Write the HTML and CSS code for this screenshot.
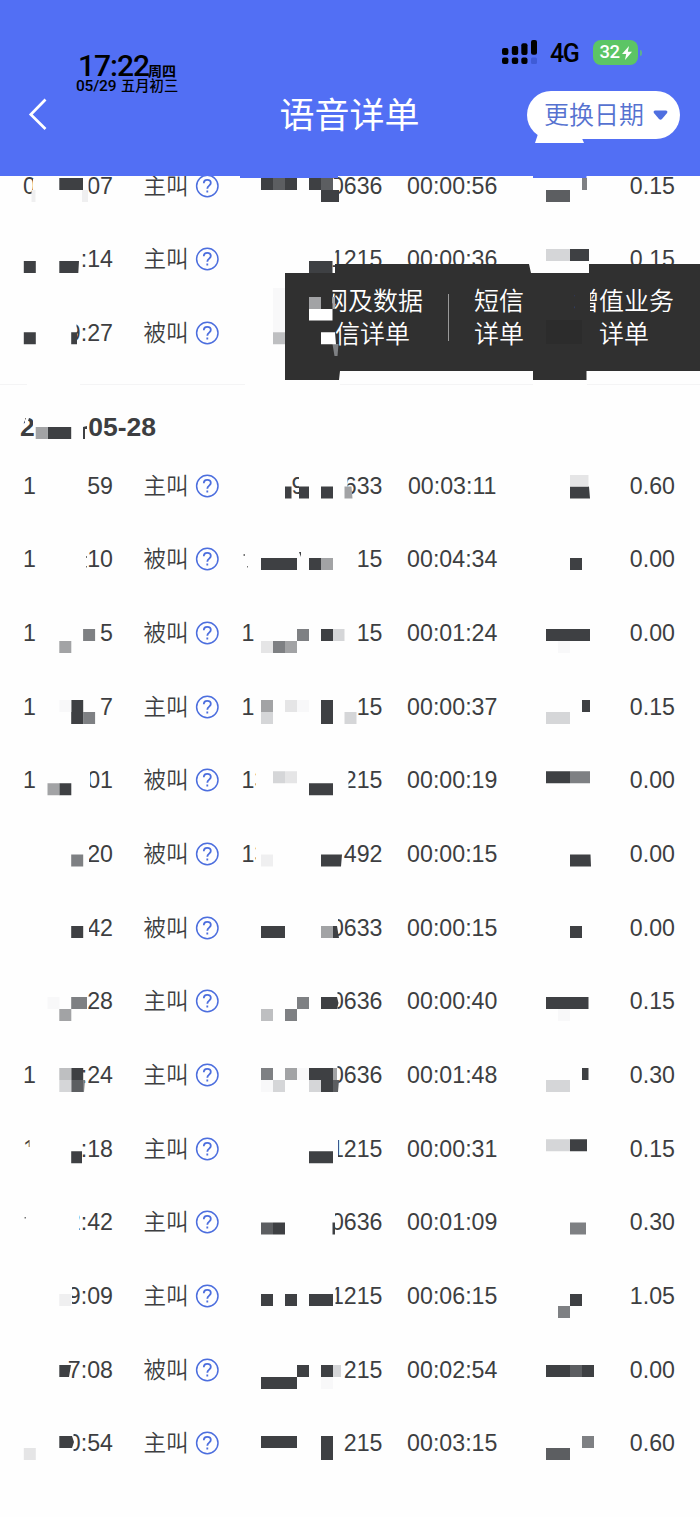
FILE: index.html
```html
<!DOCTYPE html>
<html lang="zh-CN">
<head>
<meta charset="utf-8">
<title>语音详单</title>
<link rel="stylesheet" href="styles.css">
</head>
<body>
<svg class="defs" width="0" height="0" aria-hidden="true">
  <symbol id="help" viewBox="0 0 24 24"><circle cx="12.300" cy="12" r="10.700"/><path stroke-width="1.800" d="M8.800 9.300C8.800 7 10.200 5.900 12.200 5.900s3.600 1.300 3.600 3.200c0 2.500-3.500 2.700-3.500 5.600M12.300 16.600v2"/></symbol>
</svg>
<div class="screen">
  <header class="header">
    <div class="status">
      <div class="clock">
        <div class="clock-main"><span class="clock-time">17:22</span><span class="clock-week">周四</span></div>
        <div class="clock-date"><span class="clock-md">05/29</span><span>五月初三</span></div>
      </div>
      <div class="status-right">
        <svg class="signal" width="36" height="26" viewBox="0 0 36 26"><g fill="#000"><rect x="0" y="8" width="6.4" height="7" rx="2"/><rect x="9.8" y="6" width="6.4" height="9" rx="2"/><rect x="19.3" y="3.3" width="6.2" height="11.7" rx="2"/><rect x="29" y="0" width="6" height="14.8" rx="2"/><rect x="0" y="17.5" width="6.4" height="6.6" rx="2"/><rect x="9.8" y="17.5" width="6.4" height="6.6" rx="2"/><rect x="19.3" y="17.5" width="6.2" height="6.6" rx="2"/></g><rect x="29" y="17.5" width="6" height="6.6" rx="1.5" fill="#3f5bd6"/></svg>
        <span class="network">4G</span>
        <span class="battery">32<svg width="10" height="14" viewBox="0 0 10 14"><path d="M7 0 0 8h4.2L3 14l7-8.200H5.800z" fill="#fff"/></svg></span>
        <i class="nub"></i>
      </div>
    </div>
    <nav class="nav">
      <svg class="back" width="20" height="34" viewBox="0 0 20 34"><path d="M17.500 1.500 2.800 16.500 17.500 31" fill="none" stroke="#fff" stroke-width="2.700"/></svg>
      <h1 class="title">语音详单</h1>
      <button class="picker">更换日期<svg class="caret" width="15" height="11" viewBox="0 0 15 11"><path d="M2.200.500h10.600q2.200.400 1.300 2.400L9 9q-1.500 1.600-3 0L.900 2.900Q0 .900 2.200.500z" fill="#4f6fe0"/></svg></button>
    </nav>
  </header>

  <main>
    <section class="group first">
      <div class="row"><span class="time"><b>0</b><b>07</b></span><span class="type"><em>主叫</em><svg class="help"><use href="#help"/></svg></span><span class="num"><b></b><b>0636</b></span><span class="dur">00:00:56</span><span class="fee">0.15</span></div>
      <div class="row"><span class="time"><b></b><b>:14</b></span><span class="type"><em>主叫</em><svg class="help"><use href="#help"/></svg></span><span class="num"><b></b><b>1215</b></span><span class="dur">00:00:36</span><span class="fee">0.15</span></div>
      <div class="row"><span class="time"><b></b><b>9:27</b></span><span class="type"><em>被叫</em><svg class="help"><use href="#help"/></svg></span><span class="num"></span><span class="dur"></span><span class="fee"></span></div>
    </section>
    <section class="group">
      <h2 class="day"><span>2</span><span>05-28</span></h2>
      <div class="row"><span class="time"><b>1</b><b>59</b></span><span class="type"><em>主叫</em><svg class="help"><use href="#help"/></svg></span><span class="num"><b class="mid">9</b><b>633</b></span><span class="dur">00:03:11</span><span class="fee">0.60</span></div>
      <div class="row"><span class="time"><b>1</b><b>10</b></span><span class="type"><em>被叫</em><svg class="help"><use href="#help"/></svg></span><span class="num"><b></b><b>15</b></span><span class="dur">00:04:34</span><span class="fee">0.00</span></div>
      <div class="row"><span class="time"><b>1</b><b>5</b></span><span class="type"><em>被叫</em><svg class="help"><use href="#help"/></svg></span><span class="num"><b>1</b><b>15</b></span><span class="dur">00:01:24</span><span class="fee">0.00</span></div>
      <div class="row"><span class="time"><b>1</b><b>7</b></span><span class="type"><em>主叫</em><svg class="help"><use href="#help"/></svg></span><span class="num"><b>1</b><b>15</b></span><span class="dur">00:00:37</span><span class="fee">0.15</span></div>
      <div class="row"><span class="time"><b>1</b><b>01</b></span><span class="type"><em>被叫</em><svg class="help"><use href="#help"/></svg></span><span class="num"><b>13</b><b>215</b></span><span class="dur">00:00:19</span><span class="fee">0.00</span></div>
      <div class="row"><span class="time"><b></b><b>20</b></span><span class="type"><em>被叫</em><svg class="help"><use href="#help"/></svg></span><span class="num"><b>13</b><b>492</b></span><span class="dur">00:00:15</span><span class="fee">0.00</span></div>
      <div class="row"><span class="time"><b></b><b>42</b></span><span class="type"><em>被叫</em><svg class="help"><use href="#help"/></svg></span><span class="num"><b></b><b>0633</b></span><span class="dur">00:00:15</span><span class="fee">0.00</span></div>
      <div class="row"><span class="time"><b></b><b>28</b></span><span class="type"><em>主叫</em><svg class="help"><use href="#help"/></svg></span><span class="num"><b></b><b>0636</b></span><span class="dur">00:00:40</span><span class="fee">0.15</span></div>
      <div class="row"><span class="time"><b>1</b><b>:24</b></span><span class="type"><em>主叫</em><svg class="help"><use href="#help"/></svg></span><span class="num"><b></b><b>0636</b></span><span class="dur">00:01:48</span><span class="fee">0.30</span></div>
      <div class="row"><span class="time"><b>1</b><b>:18</b></span><span class="type"><em>主叫</em><svg class="help"><use href="#help"/></svg></span><span class="num"><b></b><b>1215</b></span><span class="dur">00:00:31</span><span class="fee">0.15</span></div>
      <div class="row"><span class="time"><b></b><b>2:42</b></span><span class="type"><em>主叫</em><svg class="help"><use href="#help"/></svg></span><span class="num"><b></b><b>0636</b></span><span class="dur">00:01:09</span><span class="fee">0.30</span></div>
      <div class="row"><span class="time"><b></b><b>9:09</b></span><span class="type"><em>主叫</em><svg class="help"><use href="#help"/></svg></span><span class="num"><b></b><b>1215</b></span><span class="dur">00:06:15</span><span class="fee">1.05</span></div>
      <div class="row"><span class="time"><b></b><b>7:08</b></span><span class="type"><em>被叫</em><svg class="help"><use href="#help"/></svg></span><span class="num"><b></b><b>215</b></span><span class="dur">00:02:54</span><span class="fee">0.00</span></div>
      <div class="row"><span class="time"><b></b><b>0:54</b></span><span class="type"><em>主叫</em><svg class="help"><use href="#help"/></svg></span><span class="num"><b></b><b>215</b></span><span class="dur">00:03:15</span><span class="fee">0.60</span></div>
    </section>
  </main>

  <div class="menu">
    <span class="menu-item data"><span>网及数据</span><span>信详单</span></span>
    <i class="menu-line"></i>
    <span class="menu-item sms"><span>短信</span><span>详单</span></span>
    <span class="menu-item extra"><span>增值业务</span><span>详单</span></span>
  </div>

  <!-- Redaction layer: blanks first, mosaic tiles above -->
  <svg class="mosaic" width="700" height="1517" viewBox="0 0 700 1517">
    <path fill="#fefefe" d="M33 179h10v20H33zM84 179h4.500v20H84zM325 179h12v20h-12zM325 250h10.500v14H325zM65 320h11.500v25H65zM27 382h53v4H27zM245 382h95v4h-95zM533 382h54v4h-54zM20 416l5 0 0 8-5 4zM26 418l-4 9 4 0 3-9zM33 416h3v11h-3zM299 474h9v24h-9zM340 474h7.500v24H340zM240 546h20v8h-20zM240 556h20v14h-20zM84 771h6v20H84zM256 770h13v22h-13zM342 770h6.500v22H342zM256 843h13v24h-13zM84 844h5v20H84zM84 918h5v20H84zM325 918h13v22h-13zM325 991h12.500v22H325zM325 1065h12.500v22H325zM22 1147h12v16H22zM29.500 1138h7v20h-7zM325 1138h13v24h-13zM65 1212h14v22H65zM325 1212h10v22H325zM65 1286h7v22h-7zM325 1286h10.500v22H325zM65 1433h8.500v22H65z"/>
    <path fill="#526ff4" d="M240 175h98v3h-98zM533 175h53.500v3H533z"/>
    <path fill="#fff" d="M538 134h42l4 9h-49z"/>
    <path fill="#303030" d="M323 286h9.500v34H323zM575 286h15v34h-15z"/>
    <path fill="#2c2c2c" d="M546 320h36v24h-36z"/>
    <path fill="#3e4043" d="M59.300 178h23.700v12H59.300zM261 178h12v12h-12zM285 178h12v12h-12zM309 178h12v12h-12zM321 190h18v12h-18zM23.800 261h12v12h-12zM59.300 261H79l-.7 12h-19zM309 261h23.500v12H309zM570 249h19v12h-19zM23.800 332.300h12v12h-12zM71.200 332.300H77v12h-5.800zM47.600 427h23.600v12H47.600zM83 427l4-1v3h-2v10h-2zM285 486.600h6.500v12H285zM299 486.600h10v12h-10zM321 486.600h12v12h-12zM570 486.600h19l1 12h-20zM261 558h36v12h-36zM309 558h12v12h-12zM570 558h12v12h-12zM299 552h2v5zM321 629h12v12h-12zM546 629h44v12h-44zM71.200 700h12v24h-12zM321 700h12v24h-12zM582 700h8v12h-8zM59.300 783.300h12v12h-12zM309 783.300h24v12h-24zM546 771.300h24v12h-24zM321 854.500h21l-1 12h-20zM570 854.500h20.500l.5 12h-21zM71.200 926h12v12h-12zM261 926h24v12h-24zM333 926h4l2 12h-6zM570 926h12v12h-12zM321 997h16l1.500 6-1.500 6h-16zM546 997h42.500v12H546zM71.200 1068h12v12h-12zM309 1068h24v24h-12v-12h-12zM582 1068h6.500v12H582zM71.200 1151.300H82v12H71.200zM309 1151.300h24v12h-24zM570 1139.300h17v12h-17zM273 1222.600h12v12h-12zM332.500 1222.600h2.500v12h-2.500zM261 1294h12v12h-12zM285 1294h12v12h-12zM309 1294h24v12h-24zM570 1294h12v12h-12zM59.300 1365H71l-2 12h-9.700zM297 1365h12v12h-12zM261 1377h36v12h-36zM321 1365h12v12h-12zM546 1365h24v12h-24zM582 1365h12v12h-12zM59.300 1436H72l2 6-2 6H59.300zM261 1436h36v12h-36zM321 1436h12v24h-12z"/>
    <path fill="#5c5e61" d="M273 178h12v12h-12zM321 178h12v12h-12zM546 190h24v12h-24zM71.200 1080h12v12h-12zM333 1080h6l-1 12h-5zM261 1222.600h12v12h-12zM570 1365h12v12h-12zM546 1448h24v12h-24z"/>
    <path fill="#7e8083" d="M332.500 344h6l-1 12h-3zM582 178h5v12h-5zM83.100 629h12v12h-12zM273 641h12v12h-12zM297 629h12v12h-12zM83.100 712h12v12h-12zM570 771.300h20v12h-20zM71.200 854.500h12v12h-12zM71.200 997H87v12H71.200zM285 1009h12v12h-12zM297 997h12v12h-12zM261 1068h12v12h-12zM83 1080h2l-1 12h-1zM570 1222.600h16v12h-16zM558 1306h12v12h-12zM582 1436h12v12h-12z"/>
    <path fill="#a2a3a5" d="M309 297h12v12h-12zM332.500 297h2.500v12h-2.500zM35.700 427h12v12h-12zM344.500 486.600h7l1 12h-8zM321 558h12v12h-12zM59.300 641h12v12h-12zM285 641h12v12h-12zM261 700h12v12h-12zM47.500 783.300h11.800v12H47.500zM321 926h12v12h-12zM59.300 1009h12v12h-12zM285 1068h12v12h-12zM333 1068h4v12h-4z"/>
    <path fill="#bebfc1" d="M273 332.300h12v12h-12zM261 1009h12v12h-12zM59.300 1068h12v12h-12z"/>
    <path fill="#d5d6d8" d="M546 249h24v12h-24zM333 629h11.500v12H333zM261 712h12v12h-12zM344.500 712h12v12h-12zM546 712h24v12h-24zM273 771.300h12v12h-12zM59.300 1080h12v12h-12zM273 1080h12v12h-12zM309 1080h12v12h-12zM546 1080h24v12h-24zM546 1139.300h24v12h-24zM333 1365h8v12h-8z"/>
    <path fill="#e5e5e6" d="M570 475h18.500v11.600H570zM261 641h12v12h-12zM285 700h12v12h-12zM285 771.300h12v12h-12zM23.800 1448h12v12h-12z"/>
    <path fill="#efeff0" d="M31.500 190h4v12h-4zM82 190h6v12h-6zM261 854.500h12v12h-12zM59.300 1294h12v12h-12z"/>
    <path fill="#f8f8f9" d="M273 288h12v44h-12zM558 641h12v12h-12zM59.300 700h12v12h-12zM297 700h12v12h-12zM47.500 997h12v12h-12zM558 1009h12v12h-12zM261 1080h12v12h-12zM297 1068h12v12h-12zM321 1377h12v12h-12z"/>
    <path fill="#fff" d="M309 309h23.500v11.500H309zM321 332.300h14l1 12h-15z"/>
    <path fill="#777" d="M243.500 554h1.500v2h-1.500zM247 566h1v1.500h-1zM86 556h1v2h-1zM86 566h1v1.500h-1zM24.500 1217h1.500v1.500h-1.500z"/>
  </svg>
</div>
</body>
</html>
```
FILE: styles.css
```css
* { box-sizing: border-box; }
body { margin: 0; background: #fefefe; color: #3d3e41; font-family: "Liberation Sans", "Noto Sans CJK SC", sans-serif; }
.defs { position: absolute; }
.screen { position: relative; width: 700px; height: 1517px; overflow: hidden; }

.header { height: 176px; background: #526ff4; }
.status { height: 91px; display: flex; justify-content: space-between; align-items: flex-start; padding: 39.500px 58px 0 76px; color: #000; }
.clock { padding-top: 11px; font-family: Roboto, "Noto Sans CJK SC", sans-serif; font-weight: 700; }
.clock-main { height: 27px; display: flex; align-items: baseline; line-height: 30px; padding-left: 2px; }
.clock-time { width: 70px; font-size: 30px; letter-spacing: -1px; font-weight: 500; }
.clock-week { font-size: 14px; }
.clock-date { display: flex; gap: 5px; font-size: 14.300px; line-height: 16px; font-weight: 500; }
.clock-md { width: 40px; font-size: 15.500px; letter-spacing: -0.200px; }
.status-right { display: flex; align-items: center; height: 26px; }
.network { margin-left: 12px; width: 43px; font: 500 25px/24px Roboto, sans-serif; letter-spacing: -1.500px; padding-top: 2px; }
.battery { width: 45px; height: 25px; border-radius: 8px; background: #5cc565; display: flex; align-items: center; justify-content: center; gap: 2px; color: #fff; font: 500 18.500px/25px Roboto, sans-serif; letter-spacing: -0.500px; }
.nub { width: 2px; height: 6px; margin-left: 2px; border-radius: 0 2px 2px 0; background: #5cae91; }

.nav { display: grid; grid-template-columns: 249.500px 200px 1fr; align-items: center; height: 48px; padding-right: 20px; }
.back { margin-left: 28px; }
.title { margin: 0; padding-bottom: 4px; text-align: center; color: #fff; font: 400 35px/44px "Noto Sans CJK SC", sans-serif; }
.picker { justify-self: end; width: 153px; height: 48px; border: 0; border-radius: 24px; padding: 0 12px 4px 17px; display: flex; align-items: center; justify-content: space-between; background: #fff; color: #5672d0; font: 350 25px/44px "Noto Sans CJK SC", sans-serif; }
.caret { margin-top: 4px; }

.group.first { height: 209px; overflow: hidden; border-bottom: 1px solid #f4f4f5; }
.group.first .row:first-child { margin-top: -27.300px; }
.day { margin: 0; height: 63.700px; padding: 20px 0 0 20px; display: flex; gap: 53.500px; font: 700 26.500px/44px "Liberation Sans", sans-serif; }
.row { display: grid; grid-template-columns: 90px 128.500px 141px 139.500px 153px; align-items: center; height: 73.700px; padding-left: 23px; font-size: 23.200px; line-height: 30px; }
.row b { font-weight: 400; }
.time, .num { display: flex; justify-content: space-between; }
.type { margin-left: 30.500px; display: flex; align-items: center; gap: 6px; font-size: 22.500px; font-family: "Noto Sans CJK SC", sans-serif; font-weight: 350; }
.type em { font-style: normal; padding-bottom: 4px; line-height: 28px; }
.help { width: 24px; height: 24px; fill: none; stroke: #4c6ede; stroke-width: 1.500; }
.mid { margin-left: 50px; }
.dur { text-align: center; }
.fee { text-align: right; }

.menu { position: absolute; left: 285px; top: 264px; width: 415px; height: 116px; padding: 18.500px 26px 0 0; display: flex; background: #303030; color: #fff; font: 350 25px/33px "Noto Sans CJK SC", sans-serif; clip-path: polygon(0 9px, 50px 9px, 50px 0, 244px 0, 246px 9px, 304px 9px, 304px 0, 100% 0, 100% 107px, 301.500px 107px, 301.500px 100%, 248px 100%, 248px 107px, 55px 107px, 54px 100%, 0 100%); }
.menu-item { display: flex; flex-direction: column; align-items: center; }
.data { width: 138px; align-items: flex-end; }
.data span:last-child { margin-right: 13px; }
.menu-line { width: 1px; height: 47px; margin: 11px 25px 0; background: #999; }
.extra { margin-left: auto; }
.mosaic { position: absolute; left: 0; top: 0; pointer-events: none; }
```
